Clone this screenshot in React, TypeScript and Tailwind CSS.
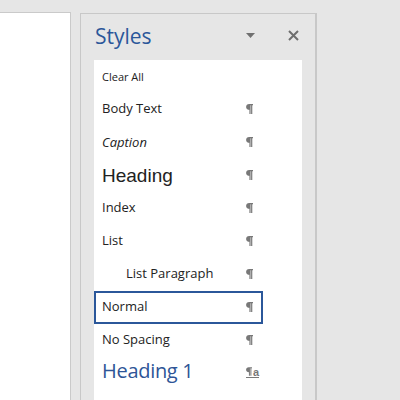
import React from "react";

type Item = { label: string; cls: string; indent?: boolean; selected?: boolean; linked?: boolean };

const items: Item[] = [
  { label: "Clear All", cls: "text-[11px] -mt-[1px]" },
  { label: "Body Text", cls: "text-[13px] -mt-[2px]" },
  { label: "Caption", cls: "text-[13px] italic -mt-[1px]" },
  { label: "Heading", cls: "text-[19px] -mt-[1px] [font-family:'Liberation_Sans',Arial,sans-serif]" },
  { label: "Index", cls: "text-[13px] -mt-[2px]" },
  { label: "List", cls: "text-[13px] -mt-[2px]" },
  { label: "List Paragraph", cls: "text-[13px] -mt-[2px]", indent: true },
  { label: "Normal", cls: "text-[13px] -mt-[2px]", selected: true },
  { label: "No Spacing", cls: "text-[13px] -mt-[2px]" },
  { label: "Heading 1", cls: "text-[20px] font-normal text-[#2e5597] -mt-[5px] tracking-[-0.3px]", linked: true },
  { label: "Heading 2", cls: "text-[16px] text-[#2e5597] -mt-[2px]", linked: true },
];

function PilcrowSvg({ w = 7, h = 10 }: { w?: number; h?: number }) {
  return (
    <svg width={w} height={h} viewBox="0 0 7 10" className="block">
      <path
        d="M3.2 0 H7 V1.3 H6.3 V10 H5.1 V1.3 H4.6 V10 H3.4 V5.8 C1.4 5.8 0.1 4.6 0.1 2.9 C0.1 1.2 1.3 0 3.2 0 Z"
        fill="#787878"
      />
    </svg>
  );
}

function Pilcrow({ linked }: { linked?: boolean }) {
  if (linked) {
    return (
      <span className="flex items-end border-b-[1.5px] border-[#787878] pb-[1px] -mt-[3px] mr-[-6px]">
        <PilcrowSvg w={6} h={9} />
        <span className="text-[11px] font-bold text-[#787878] [font-family:'Liberation_Sans',Arial,sans-serif] leading-[8px] ml-[1px]">
          a
        </span>
      </span>
    );
  }
  return (
    <span className="-mt-[1px]">
      <PilcrowSvg />
    </span>
  );
}

export default function App() {
  return (
    <div className="w-[400px] h-[400px] bg-[#e6e6e6] flex overflow-hidden [font-family:'Open_Sans','Noto_Sans',sans-serif] text-[#222]">
      <div className="mt-[12px] w-[71px] h-[388px] bg-white border-t border-r border-[#cacaca]" />
      <div className="ml-[9px] mt-[13px] w-[237px] h-[387px] flex flex-col border-l border-t border-r-2 border-[#c8c8c8] bg-[#e6e6e6]">
        <div className="h-[46px] shrink-0 flex items-center pl-[14px] pr-[16px]">
          <span className="text-[21px] text-[#2b579a] leading-none -mt-[1px]">Styles</span>
          <div className="flex-1" />
          <svg width="9" height="6" viewBox="0 0 9 6" className="mr-[33px] -mt-[2px]">
            <path d="M0 0 H9 L4.5 5 Z" fill="#707070" />
          </svg>
          <svg width="11" height="11" viewBox="0 0 11 11" className="-mt-[3px]">
            <path d="M1 1 L10 10 M10 1 L1 10" stroke="#6e6e6e" strokeWidth="2" />
          </svg>
        </div>
        <div className="mx-[13px] flex-1 bg-white overflow-hidden">
          {items.map((it) => (
            <div
              key={it.label}
              className={
                "w-[169px] h-[33px] flex items-center justify-between " +
                (it.selected
                  ? "border-2 border-[#2b579a] pl-[6px] pr-[8px]"
                  : it.indent
                  ? "pl-[32px] pr-[10px]"
                  : "pl-[8px] pr-[10px]")
              }
            >
              <span className={"leading-none whitespace-nowrap " + it.cls}>{it.label}</span>
              {it.label !== "Clear All" && <Pilcrow linked={it.linked} />}
            </div>
          ))}
        </div>
      </div>
    </div>
  );
}
